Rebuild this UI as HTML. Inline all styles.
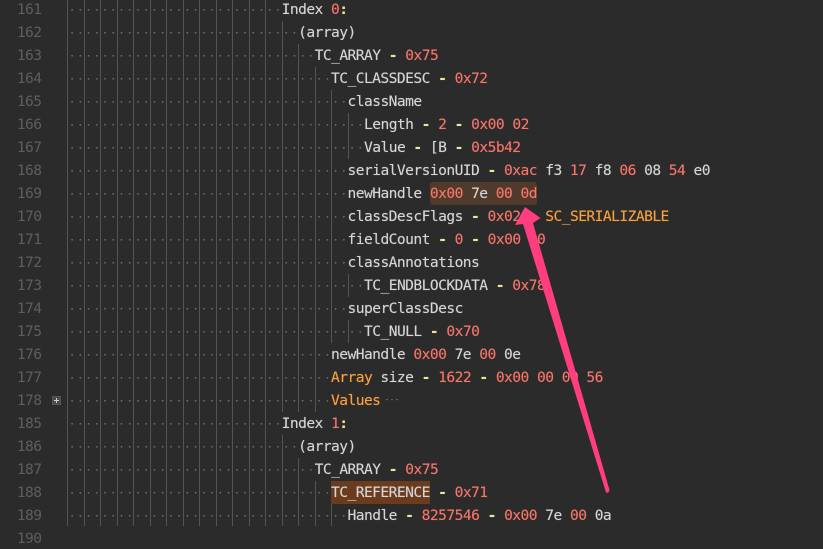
<!DOCTYPE html>
<html><head><meta charset="utf-8"><style>
html,body{margin:0;padding:0;background:#2b2b2b;}
#p{position:relative;width:823px;height:549px;overflow:hidden;background:#2b2b2b;font:14.6px/23px "DejaVu Sans Mono","Liberation Mono",monospace;letter-spacing:-.55px;color:#d6d6d6;}
.n,.t,.d,.g,.h{position:absolute;}
.n{left:17px;margin:0 0 0 -.2px;color:#5e5e5e;white-space:pre;}
.t{white-space:pre;margin:0 0 0 -.2px;text-shadow:0 0 .7px rgba(214,214,214,.55);}
.d{left:67.6px;height:23px;background:radial-gradient(circle at 4.1px 11.8px,#707070 0,#707070 .6px,transparent 1.1px);background-size:8.24px 23px;}
.g{width:1px;background:#545454;}
b{font-weight:normal;color:#f8756a;text-shadow:0 0 .7px rgba(248,117,106,.55);}
i{font-style:normal;color:#f6e58d;font-weight:bold;}
u{text-decoration:none;color:#f9a03f;text-shadow:0 0 .7px rgba(249,160,63,.55);}
</style></head><body><div id="p">
<div class="h" style="left:430px;top:182px;width:107px;height:23px;background:#4f3a2b;border-radius:3px"></div>
<div class="h" style="left:331px;top:481px;width:99px;height:23px;background:#6b3b1e"></div>

<div class="g" style="left:67px;top:0;height:526px"></div>
<div class="g" style="left:84px;top:0;height:526px"></div>
<div class="g" style="left:100px;top:0;height:526px"></div>
<div class="g" style="left:117px;top:0;height:526px"></div>
<div class="g" style="left:133px;top:0;height:526px"></div>
<div class="g" style="left:150px;top:0;height:526px"></div>
<div class="g" style="left:166px;top:0;height:526px"></div>
<div class="g" style="left:183px;top:0;height:526px"></div>
<div class="g" style="left:199px;top:0;height:526px"></div>
<div class="g" style="left:216px;top:0;height:526px"></div>
<div class="g" style="left:232px;top:0;height:526px"></div>
<div class="g" style="left:249px;top:0;height:526px"></div>
<div class="g" style="left:265px;top:0;height:526px"></div>
<div class="g" style="left:282px;top:21px;height:391px"></div>
<div class="g" style="left:282px;top:435px;height:91px"></div>
<div class="g" style="left:298px;top:44px;height:368px"></div>
<div class="g" style="left:298px;top:458px;height:68px"></div>
<div class="g" style="left:315px;top:67px;height:345px"></div>
<div class="g" style="left:315px;top:481px;height:45px"></div>
<div class="g" style="left:331px;top:90px;height:253px"></div>
<div class="g" style="left:331px;top:504px;height:22px"></div>
<div class="g" style="left:348px;top:113px;height:46px"></div>
<div class="g" style="left:348px;top:274px;height:23px"></div>
<div class="g" style="left:348px;top:320px;height:23px"></div>

<div class="d" style="top:-2.5px;width:214px"></div>
<div class="d" style="top:20.5px;width:231px"></div>
<div class="d" style="top:43.5px;width:247px"></div>
<div class="d" style="top:66.5px;width:264px"></div>
<div class="d" style="top:89.5px;width:280px"></div>
<div class="d" style="top:112.5px;width:296px"></div>
<div class="d" style="top:135.5px;width:296px"></div>
<div class="d" style="top:158.5px;width:280px"></div>
<div class="d" style="top:181.5px;width:280px"></div>
<div class="d" style="top:204.5px;width:280px"></div>
<div class="d" style="top:227.5px;width:280px"></div>
<div class="d" style="top:250.5px;width:280px"></div>
<div class="d" style="top:273.5px;width:296px"></div>
<div class="d" style="top:296.5px;width:280px"></div>
<div class="d" style="top:319.5px;width:296px"></div>
<div class="d" style="top:342.5px;width:264px"></div>
<div class="d" style="top:365.5px;width:264px"></div>
<div class="d" style="top:388.5px;width:264px"></div>
<div class="d" style="top:411.5px;width:214px"></div>
<div class="d" style="top:434.5px;width:231px"></div>
<div class="d" style="top:457.5px;width:247px"></div>
<div class="d" style="top:480.5px;width:264px"></div>
<div class="d" style="top:503.5px;width:280px"></div>

<div class="n" style="top:-2.5px">161</div><div class="t" style="top:-2.5px;left:281.8px">Index <b>0</b><i>:</i></div>
<div class="n" style="top:20.5px">162</div><div class="t" style="top:20.5px;left:298.3px">(array)</div>
<div class="n" style="top:43.5px">163</div><div class="t" style="top:43.5px;left:314.8px">TC_ARRAY <i>-</i> <b>0x75</b></div>
<div class="n" style="top:66.5px">164</div><div class="t" style="top:66.5px;left:331.2px">TC_CLASSDESC <i>-</i> <b>0x72</b></div>
<div class="n" style="top:89.5px">165</div><div class="t" style="top:89.5px;left:347.7px">className</div>
<div class="n" style="top:112.5px">166</div><div class="t" style="top:112.5px;left:364.2px">Length <i>-</i> <b>2</b> <i>-</i> <b>0x00 02</b></div>
<div class="n" style="top:135.5px">167</div><div class="t" style="top:135.5px;left:364.2px">Value <i>-</i> [B <i>-</i> <b>0x5b42</b></div>
<div class="n" style="top:158.5px">168</div><div class="t" style="top:158.5px;left:347.7px">serialVersionUID <i>-</i> <b>0xac</b> f3 <b>17</b> f8 <b>06</b> 08 <b>54</b> e0</div>
<div class="n" style="top:181.5px">169</div><div class="t" style="top:181.5px;left:347.7px">newHandle <b>0x00</b> 7e <b>00 0d</b></div>
<div class="n" style="top:204.5px">170</div><div class="t" style="top:204.5px;left:347.7px">classDescFlags <i>-</i> <b>0x02</b> <i>-</i> <u>SC_SERIALIZABLE</u></div>
<div class="n" style="top:227.5px">171</div><div class="t" style="top:227.5px;left:347.7px">fieldCount <i>-</i> <b>0</b> <i>-</i> <b>0x00 00</b></div>
<div class="n" style="top:250.5px">172</div><div class="t" style="top:250.5px;left:347.7px">classAnnotations</div>
<div class="n" style="top:273.5px">173</div><div class="t" style="top:273.5px;left:364.2px">TC_ENDBLOCKDATA <i>-</i> <b>0x78</b></div>
<div class="n" style="top:296.5px">174</div><div class="t" style="top:296.5px;left:347.7px">superClassDesc</div>
<div class="n" style="top:319.5px">175</div><div class="t" style="top:319.5px;left:364.2px">TC_NULL <i>-</i> <b>0x70</b></div>
<div class="n" style="top:342.5px">176</div><div class="t" style="top:342.5px;left:331.2px">newHandle <b>0x00</b> 7e <b>00</b> 0e</div>
<div class="n" style="top:365.5px">177</div><div class="t" style="top:365.5px;left:331.2px"><u>Array</u> size <i>-</i> <b>1622</b> <i>-</i> <b>0x00 00 00 56</b></div>
<div class="n" style="top:388.5px">178</div><div class="t" style="top:388.5px;left:331.2px"><u>Values</u></div>
<div class="n" style="top:411.5px">185</div><div class="t" style="top:411.5px;left:281.8px">Index <b>1</b><i>:</i></div>
<div class="n" style="top:434.5px">186</div><div class="t" style="top:434.5px;left:298.3px">(array)</div>
<div class="n" style="top:457.5px">187</div><div class="t" style="top:457.5px;left:314.8px">TC_ARRAY <i>-</i> <b>0x75</b></div>
<div class="n" style="top:480.5px">188</div><div class="t" style="top:480.5px;left:331.2px">TC_REFERENCE <i>-</i> <b>0x71</b></div>
<div class="n" style="top:503.5px">189</div><div class="t" style="top:503.5px;left:347.7px">Handle <i>-</i> <b>8257546</b> <i>-</i> <b>0x00</b> 7e <b>00</b> 0a</div>
<div class="n" style="top:526.5px">190</div>

<svg width="823" height="549" style="position:absolute;left:0;top:0">
<rect x="52.5" y="396.5" width="8" height="8" fill="#4a4a4a" stroke="#555"/>
<path d="M54 400.5h5M56.5 398v5" stroke="#d0d0d0" stroke-width="1" fill="none"/>
<circle cx="387" cy="399.500" r=".8" fill="#777"/><circle cx="392" cy="399.500" r=".8" fill="#777"/><circle cx="397" cy="399.500" r=".8" fill="#777"/>
<path d="M525 207 L540.500 218 L533 223 L609.500 490 Q609 493.500 606 492.500 L523 224 L515 225 Z" fill="#ff3d7f"/>
</svg>
</div></body></html>
